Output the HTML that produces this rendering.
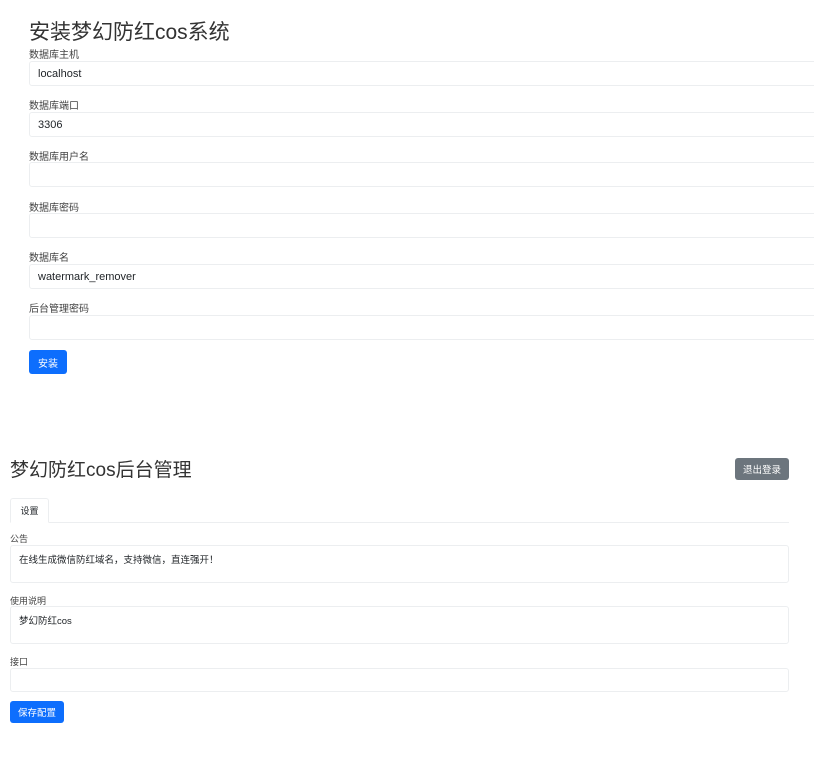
<!DOCTYPE html>
<html><head><meta charset="utf-8"><style>
*{box-sizing:border-box;margin:0;padding:0}
body{width:814px;height:766px;background:#fff;font-family:"Liberation Sans","Noto Sans CJK SC",sans-serif;color:#212529;position:relative;overflow:hidden}
.a{position:absolute}
.lbl{font-size:10px;color:#444;position:absolute}
.inp{position:absolute;border:1px solid #eceef0;border-radius:3px;background:#fff;font-size:11px;padding-left:8px;display:flex;align-items:center}
.ta{align-items:flex-start;padding-top:6px;font-size:10px}
.btn{position:absolute;border-radius:3px;color:#fff;font-size:10px;display:flex;align-items:center;justify-content:center}
</style></head><body>
<div class="a" style="left:29px;top:16px;font-size:21px;color:#333">安装梦幻防红cos系统</div>
<div class="lbl" style="left:29px;top:46px">数据库主机</div>
<div class="inp" style="left:29px;top:61px;width:800px;height:25px">localhost</div>
<div class="lbl" style="left:29px;top:97px">数据库端口</div>
<div class="inp" style="left:29px;top:112px;width:800px;height:25px">3306</div>
<div class="lbl" style="left:29px;top:148px">数据库用户名</div>
<div class="inp" style="left:29px;top:162px;width:800px;height:25px"></div>
<div class="lbl" style="left:29px;top:199px">数据库密码</div>
<div class="inp" style="left:29px;top:213px;width:800px;height:25px"></div>
<div class="lbl" style="left:29px;top:249px">数据库名</div>
<div class="inp" style="left:29px;top:264px;width:800px;height:25px">watermark_remover</div>
<div class="lbl" style="left:29px;top:300px">后台管理密码</div>
<div class="inp" style="left:29px;top:315px;width:800px;height:25px"></div>
<div class="btn" style="left:29px;top:350px;width:38px;height:24px;background:#0d6efd">安装</div>

<div class="a" style="left:10px;top:455px;font-size:19px;color:#333">梦幻防红cos后台管理</div>
<div class="btn" style="left:735px;top:458px;width:54px;height:22px;background:#6c757d;font-size:9.5px">退出登录</div>
<div class="a" style="left:10px;top:522px;width:779px;border-top:1px solid #eceef0"></div>
<div class="a" style="left:10px;top:498px;width:39px;height:25px;border:1px solid #eceef0;border-bottom-color:#fff;border-radius:3px 3px 0 0;background:#fff;font-size:9px;display:flex;align-items:center;justify-content:center">设置</div>
<div class="lbl" style="left:10px;top:532px;font-size:9px">公告</div>
<div class="inp ta" style="left:10px;top:545px;width:779px;height:38px;font-size:9.5px">在线生成微信防红域名，支持微信，直连强开！</div>
<div class="lbl" style="left:10px;top:594px;font-size:9px">使用说明</div>
<div class="inp ta" style="left:10px;top:606px;width:779px;height:38px;font-size:9.5px">梦幻防红cos</div>
<div class="lbl" style="left:10px;top:655px;font-size:9px">接口</div>
<div class="inp" style="left:10px;top:668px;width:779px;height:24px"></div>
<div class="btn" style="left:10px;top:701px;width:54px;height:22px;background:#0d6efd;font-size:9.5px">保存配置</div>
</body></html>
